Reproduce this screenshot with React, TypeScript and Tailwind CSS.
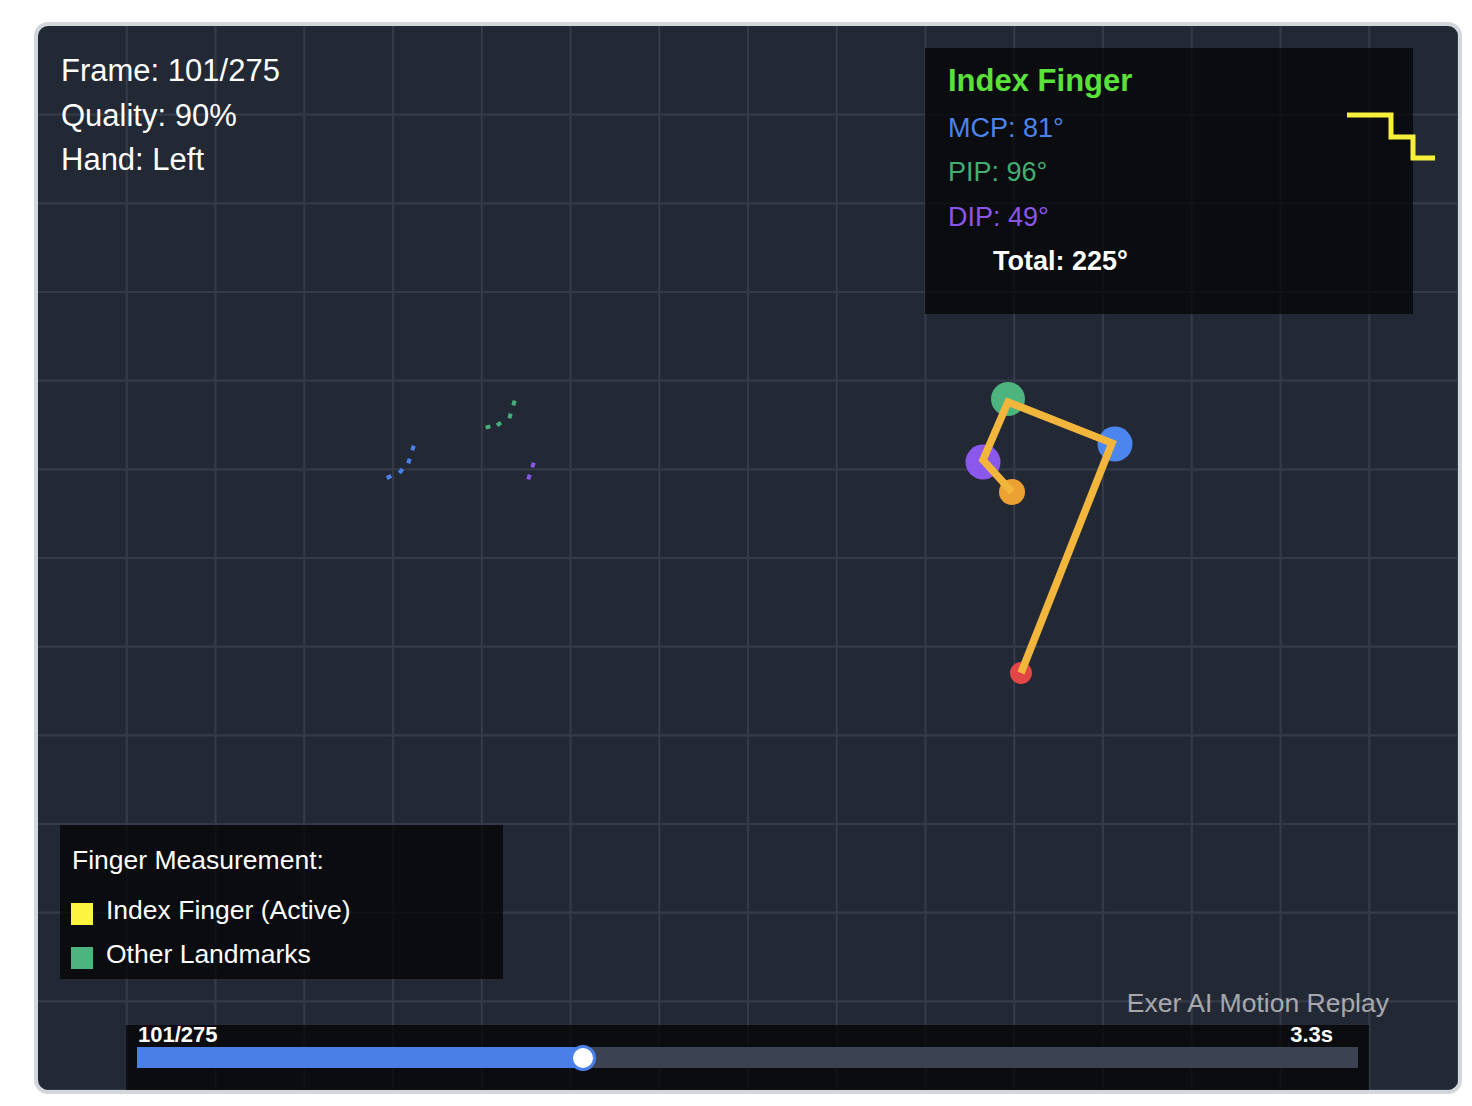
import React from "react";

const W = 1420;
const H = 1064;

const frame = 101;
const totalFrames = 275;

// landmark points, in canvas pixels
const joints = [
  { x: 970, y: 373, r: 17, color: "#4bb47f" },
  { x: 1077, y: 418, r: 17.5, color: "#4a86ee" },
  { x: 945, y: 436, r: 17.5, color: "#8a58ec" },
  { x: 974, y: 466, r: 13, color: "#eca232" },
  { x: 983, y: 647, r: 11, color: "#e24646" },
];

const bones = "983,647 1074,417 970,376 945,434 974,466";

const trails = [
  { color: "#4a80e8", pts: [[351, 451], [363, 445], [371, 435], [375, 422]] },
  { color: "#46ad78", pts: [[450, 401], [461, 398], [472, 390], [476, 377]] },
  { color: "#8656e6", pts: [[491, 451], [495, 439]] },
];

const CanvasLayer = () => {
  const cols = Array.from({ length: 16 }, (_, i) => (i + 1) * (W / 16));
  const rows = Array.from({ length: 12 }, (_, i) => (i + 1) * (H / 12));

  return (
    <svg className="absolute inset-0" width={W} height={H} viewBox={`0 0 ${W} ${H}`}>
      {cols.map((x) => (
        <line key={"c" + x} x1={x} y1={0} x2={x} y2={H} stroke="#343a48" strokeWidth={2.2} />
      ))}
      {rows.map((y) => (
        <line key={"r" + y} x1={0} y1={y} x2={W} y2={y} stroke="#343a48" strokeWidth={2.2} />
      ))}

      {trails.map((t, i) =>
        t.pts.map(([x, y], j) => {
          const next = t.pts[j + 1] || t.pts[j - 1];
          const dx = next[0] - x;
          const dy = next[1] - y;
          const len = Math.hypot(dx, dy) || 1;
          const ux = (dx / len) * 2.5;
          const uy = (dy / len) * 2.5;
          return (
            <line
              key={i + "-" + j}
              x1={x - ux}
              y1={y - uy}
              x2={x + ux}
              y2={y + uy}
              stroke={t.color}
              strokeWidth={4}
            />
          );
        })
      )}

      {joints.map((j) => (
        <circle key={j.x} cx={j.x} cy={j.y} r={j.r} fill={j.color} />
      ))}
      <polyline points={bones} fill="none" stroke="#f2b63c" strokeWidth={7.5} strokeLinejoin="miter" />
    </svg>
  );
};

export default function App() {
  const pct = ((frame - 1) / (totalFrames - 1)) * 100;

  return (
    <div className="min-h-screen bg-white pl-[34px] pt-[22px]">
      <div className="relative w-[1428px] h-[1072px] overflow-hidden rounded-[14px] border-4 border-[#d3d6db] bg-[#222834] font-['Liberation_Sans',Arial,sans-serif] text-white">
        <CanvasLayer />

        {/* frame info */}
        <div className="absolute left-[23px] top-[23px] text-[31px] leading-[44.5px]">
          <div>Frame: {frame}/{totalFrames}</div>
          <div>Quality: 90%</div>
          <div>Hand: Left</div>
        </div>

        {/* angle readout */}
        <div className="absolute left-[887px] top-[22px] flex h-[266px] w-[488px] flex-col bg-black/70 pl-[23px] pt-[11px]">
          <div className="mb-[2px] text-[31px] font-bold leading-[44.5px] text-[#5be23a]">Index Finger</div>
          <div className="text-[27px] leading-[44.5px] text-[#4d84e8]">MCP: 81°</div>
          <div className="text-[27px] leading-[44.5px] text-[#44ad74]">PIP: 96°</div>
          <div className="text-[27px] leading-[44.5px] text-[#8a55ea]">DIP: 49°</div>
          <div className="ml-[45px] text-[27px] font-bold leading-[44.5px]">Total: 225°</div>
        </div>

        {/* motion trace */}
        <svg className="absolute left-[1300px] top-[80px]" width="110" height="60" viewBox="0 0 110 60">
          <polyline
            points="9,9 53,9 53,31 75,31 75,52 97,52"
            fill="none"
            stroke="#f8ef3c"
            strokeWidth={5}
          />
        </svg>

        {/* legend */}
        <div className="absolute left-[22px] top-[799px] h-[154px] w-[443px] bg-black/70 pl-[11px] pt-[20px] text-[26.5px] leading-[30px]">
          <div className="mb-[20px] pl-[1px]">Finger Measurement:</div>
          <div className="flex flex-col gap-[14px]">
            <div className="flex items-start gap-[13px]">
              <span className="mt-[8px] h-[22px] w-[22px] bg-[#fcf43e]" />
              <span>Index Finger (Active)</span>
            </div>
            <div className="flex items-start gap-[13px]">
              <span className="mt-[8px] h-[22px] w-[22px] bg-[#4bb47f]" />
              <span>Other Landmarks</span>
            </div>
          </div>
        </div>

        <div className="absolute right-[69px] top-[962px] text-[26.5px] leading-[30px] text-white/60">
          Exer AI Motion Replay
        </div>

        {/* timeline */}
        <div className="absolute left-[88px] top-[999px] h-[80px] w-[1243px] bg-black/70 pl-[11px] pr-[11px]">
          <div className="flex justify-between pl-[1px] pr-[25px] text-[22px] font-bold leading-[20px]">
            <span>{frame}/{totalFrames}</span>
            <span>3.3s</span>
          </div>
          <div className="relative mt-[2px] h-[21px] w-[1221px] bg-[#3b4252]">
            <div className="h-full bg-[#4b7fe8]" style={{ width: `${pct}%` }} />
            <div
              className="absolute top-1/2 h-[26px] w-[26px] -translate-x-1/2 -translate-y-1/2 rounded-full border-[3px] border-[#4b80ea] bg-white"
              style={{ left: `${pct}%` }}
            />
          </div>
        </div>
      </div>
    </div>
  );
}
